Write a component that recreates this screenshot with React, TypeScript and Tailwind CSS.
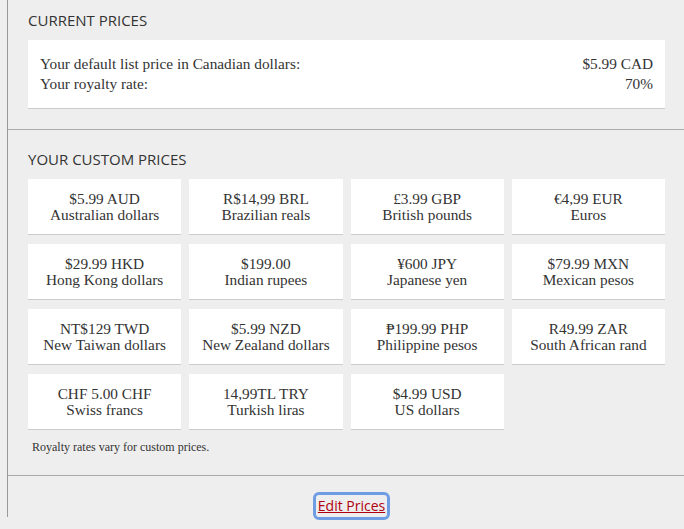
const prices = [
  { amount: "$5.99 AUD", name: "Australian dollars" },
  { amount: "R$14,99 BRL", name: "Brazilian reals" },
  { amount: "£3.99 GBP", name: "British pounds" },
  { amount: "€4,99 EUR", name: "Euros" },
  { amount: "$29.99 HKD", name: "Hong Kong dollars" },
  { amount: "$199.00", name: "Indian rupees" },
  { amount: "¥600 JPY", name: "Japanese yen" },
  { amount: "$79.99 MXN", name: "Mexican pesos" },
  { amount: "NT$129 TWD", name: "New Taiwan dollars" },
  { amount: "$5.99 NZD", name: "New Zealand dollars" },
  { amount: "₱199.99 PHP", name: "Philippine pesos" },
  { amount: "R49.99 ZAR", name: "South African rand" },
  { amount: "CHF 5.00 CHF", name: "Swiss francs" },
  { amount: "14,99TL TRY", name: "Turkish liras" },
  { amount: "$4.99 USD", name: "US dollars" },
];

const serif = "font-['Liberation_Serif',serif]";
const sans = "font-['Open_Sans','DejaVu_Sans',sans-serif]";

export default function App() {
  return (
    <div className="h-[529px] w-[684px] overflow-hidden bg-[#eeeeee] text-[#333333]">
      <div className="ml-[7px] w-[678px] border-l border-[#999999]">
        <section className="px-[20px] pb-[20px] pt-[10px]">
          <h2 className={`${sans} text-[15px] leading-[20px] text-[#333333]`}>CURRENT PRICES</h2>
          <div className={`${serif} mt-[10px] border-b border-[#cccccc] bg-white px-[12px] py-[14px] text-[15.3px] leading-[20px]`}>
            <div className="flex justify-between">
              <span>Your default list price in Canadian dollars:</span>
              <span>$5.99 CAD</span>
            </div>
            <div className="flex justify-between">
              <span>Your royalty rate:</span>
              <span>70%</span>
            </div>
          </div>
        </section>

        <section className="border-t border-[#aaaaaa] px-[20px] pb-[20px] pt-[19px]">
          <h2 className={`${sans} text-[15px] leading-[20px] text-[#333333]`}>YOUR CUSTOM PRICES</h2>
          <div className="mt-[10px] grid grid-cols-4 gap-x-[8px] gap-y-[9px]">
            {prices.map((p) => (
              <div
                key={p.name}
                className={`${serif} border-b border-[#cccccc] bg-white pb-[11px] pt-[12px] text-center text-[15.3px] leading-[16px]`}
              >
                <div>{p.amount}</div>
                <div>{p.name}</div>
              </div>
            ))}
          </div>
          <p className={`${serif} mt-[9px] pl-[4px] text-[12px] leading-[16px]`}>Royalty rates vary for custom prices.</p>
        </section>

        <section className="flex justify-center border-t border-[#aaaaaa] pl-[10px] pt-[19px]">
          <a
            href="#"
            className={`${sans} rounded-[3px] px-[2px] text-[14px] leading-[22px] text-[#b00010] underline outline-[3px] outline-[#6f9de4] outline-solid`}
          >
            Edit Prices
          </a>
        </section>
      </div>
    </div>
  );
}
